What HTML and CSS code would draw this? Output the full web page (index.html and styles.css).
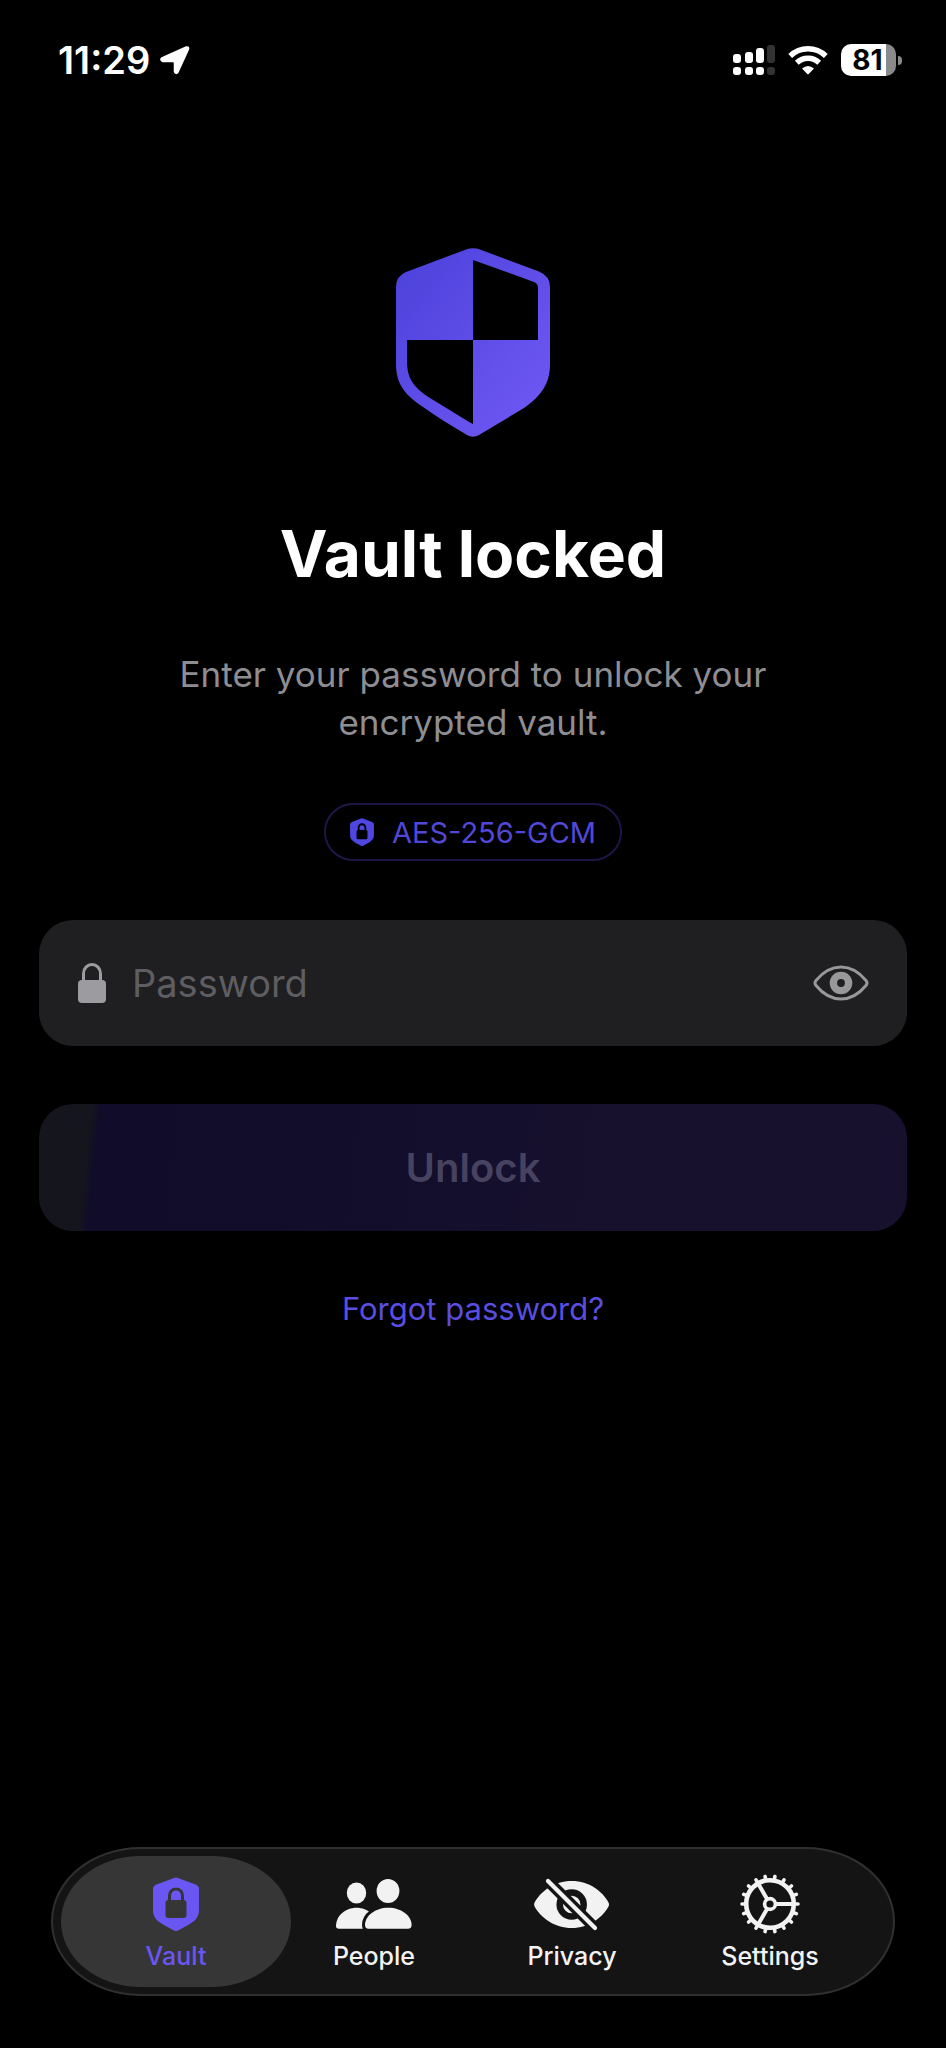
FILE: index.html
```html
<!DOCTYPE html>
<html lang="en">
<head>
    <meta charset="UTF-8">
    <meta name="viewport" content="width=device-width, initial-scale=1.0">
    <title>Vault locked</title>
    <link rel="stylesheet" href="styles.css">
</head>
<body>
    <header class="status-bar">
        <div class="status-left">
            <span class="time">11:29</span>
            <svg width="30" height="30" viewBox="0 0 30 30" aria-hidden="true">
                <path d="M2 13.500L26.500 2.500Q28.500 2 28 4L17.500 27Q16 29 15 26.500V18Q15 16 13 16H3Q0.500 15 2 13.500Z" fill="#fff" stroke="#fff" stroke-width="2.500" stroke-linejoin="round"/>
            </svg>
        </div>
        <div class="status-right">
            <svg width="42" height="31" viewBox="0 0 42 31" aria-hidden="true">
                <g fill="#fff">
                    <rect x="0" y="9" width="8" height="9" rx="3"/>
                    <rect x="12" y="7" width="8" height="11" rx="3"/>
                    <rect x="23" y="3" width="8" height="15" rx="3"/>
                    <rect x="0" y="22" width="8" height="8" rx="3"/>
                    <rect x="12" y="22" width="8" height="8" rx="3"/>
                    <rect x="23" y="22" width="8" height="8" rx="3"/>
                </g>
                <g fill="#333">
                    <rect x="34" y="0" width="8" height="18" rx="3"/>
                    <rect x="34" y="22" width="8" height="8" rx="3"/>
                </g>
            </svg>
            <svg width="40" height="30" viewBox="0 0 40 30" aria-hidden="true">
                <g fill="none" stroke="#fff" stroke-width="5.400">
                    <path d="M2.200 11A25.500 25.500 0 0 1 37.800 11"/>
                    <path d="M8.800 17.800A16 16 0 0 1 31.200 17.800"/>
                </g>
                <path d="M14 23.500Q20 18.500 26 23.500L20.700 29Q20 29.600 19.300 29Z" fill="#fff"/>
            </svg>
            <div class="battery">
                <span class="battery-level">81</span>
                <span class="battery-tip"></span>
            </div>
        </div>
    </header>

    <main class="unlock-screen">
        <svg class="logo" width="154" height="190" viewBox="0 0 154 190" aria-hidden="true">
            <defs>
                <linearGradient id="shield-fill" x1="0" y1="0" x2="1" y2="1">
                    <stop offset="0" stop-color="#4b41da"/>
                    <stop offset="1" stop-color="#7259f6"/>
                </linearGradient>
            </defs>
            <path fill="url(#shield-fill)" fill-rule="evenodd" d="M70 1.500Q77-1 84 1.500L143 23.500Q154 28 154 39V116C154 136 145 148 128 160L83 187Q77 190.500 71 187C55 177.500 41 169 27 159C9 147 0 136 0 116V39Q0 28 10 24ZM77 12V92H142V40Q142 35.500 138 34ZM11 92H77V176L74 174.500C60 166 47 158 34 150C17 139 11 130 11 113Z"/>
        </svg>

        <h1>Vault locked</h1>
        <p class="hint">Enter your password to unlock your encrypted vault.</p>

        <div class="badge">
            <svg width="24" height="28" viewBox="0 0 46 54" aria-hidden="true">
                <path fill="#4f46e0" d="M21 1Q23 0 25 1L42.500 7.500Q46 9 46 12V33C46 41 41 44.500 36 47.500L25 53.500Q23 54.500 21 53.500L10 47.500C5 44.500 0 41 0 33V12Q0 9 3.500 7.500Z"/>
                <rect x="12.500" y="23" width="21" height="18" rx="3" fill="#000"/>
                <path d="M16.500 24V18.500a6.500 6.500 0 0 1 13 0V24" fill="none" stroke="#000" stroke-width="3.500"/>
            </svg>
            <span>AES-256-GCM</span>
        </div>

        <form class="unlock-form">
            <div class="field">
                <svg width="28" height="40" viewBox="0 0 28 40" aria-hidden="true">
                    <rect x="0" y="17" width="28" height="23" rx="4" fill="#9c9ba0"/>
                    <path d="M5.500 18V10.500a8.500 9 0 0 1 17 0V18" fill="none" stroke="#9c9ba0" stroke-width="3"/>
                </svg>
                <input type="password" id="password" placeholder="Password" aria-label="Password">
                <button type="button" class="reveal" aria-label="Show password">
                    <svg width="56" height="36" viewBox="0 0 56 36" aria-hidden="true">
                        <path d="M3 20.500Q1 18 3 15.500C10 7 18 2 28 2S46 7 53 15.500Q55 18 53 20.500C46 29 38 34 28 34S10 29 3 20.500Z" fill="none" stroke="#98989a" stroke-width="3"/>
                        <circle cx="28" cy="18" r="7.600" fill="none" stroke="#98989a" stroke-width="7.400"/>
                    </svg>
                </button>
            </div>
            <button type="submit" class="unlock-btn" disabled>Unlock</button>
        </form>

        <a class="forgot" href="#">Forgot password?</a>
    </main>

    <nav class="tab-bar">
        <a class="tab active" href="#">
            <svg width="60" height="60" viewBox="-7 -3 60 60" aria-hidden="true">
                <path fill="#6a57f3" d="M21 1Q23 0 25 1L42.500 7.500Q46 9 46 12V33C46 41 41 44.500 36 47.500L25 53.500Q23 54.500 21 53.500L10 47.500C5 44.500 0 41 0 33V12Q0 9 3.500 7.500Z"/>
                <rect x="12.500" y="23" width="21" height="18" rx="3" fill="#363636"/>
                <path d="M16.500 24V18.500a6.500 6.500 0 0 1 13 0V24" fill="none" stroke="#363636" stroke-width="3"/>
            </svg>
            <span>Vault</span>
        </a>
        <a class="tab" href="#">
            <svg width="76" height="60" viewBox="0 -5 76 60" aria-hidden="true">
                <g fill="#f2f2f2">
                    <ellipse cx="20.500" cy="14" rx="9.700" ry="10.600"/>
                    <path d="M0 47C0 37 9 28.700 20.500 28.700S41 37 41 47Q41 49.700 38 49.700H3Q0 49.700 0 47Z"/>
                    <ellipse cx="52" cy="12" rx="11.400" ry="12"/>
                    <path d="M29 46C29 37 39 28.700 52.300 28.700S75.600 37 75.600 46Q75.600 49.700 72 49.700H32.600Q29 49.700 29 46Z" stroke="#141414" stroke-width="6" paint-order="stroke"/>
                </g>
            </svg>
            <span>People</span>
        </a>
        <a class="tab" href="#">
            <svg width="76" height="60" viewBox="0 -5 76 60" aria-hidden="true">
                <path d="M.6 27.500Q-.4 25.500 .6 23.500C7 12 20 2 37.700 2S68 12 74.500 23.500Q75.500 25.500 74.500 27.500C68 39 55 49 37.700 49S7 39 .6 27.500Z" fill="#f2f2f2"/>
                <circle cx="37.700" cy="25.500" r="12" fill="#f2f2f2" stroke="#141414" stroke-width="6.500"/>
                <path d="M11-1L64 52" stroke="#141414" stroke-width="11"/>
                <path d="M14 2L61 49" stroke="#f2f2f2" stroke-width="4.200" stroke-linecap="round"/>
            </svg>
            <span>Privacy</span>
        </a>
        <a class="tab" href="#">
            <svg width="60" height="60" viewBox="0 0 60 60" aria-hidden="true">
                <g fill="none" stroke="#f2f2f2" stroke-width="3.600" stroke-linecap="round">
                    <circle cx="30" cy="30" r="23.800" stroke-width="4.600"/>
                    <circle cx="30" cy="30" r="5.400"/>
                    <path d="M37 30H52M26.500 36L19 49M26.500 24L19 11" stroke-width="4"/>
                    <path d="M58 30H54M56.300 39.600L52.600 38.200M51.400 48L48.400 45.400M44 54.200L42 50.800M34.900 57.600L34.200 53.600M25.100 57.600L25.800 53.600M16 54.200L18 50.800M8.600 48L11.600 45.400M3.700 39.600L7.400 38.200M2 30H6M3.700 20.400L7.400 21.800M8.600 12L11.600 14.600M16 5.800L18 9.200M25.100 2.400L25.800 6.400M34.900 2.400L34.200 6.400M44 5.800L42 9.200M51.400 12L48.400 14.600M56.300 20.400L52.600 21.800"/>
                </g>
            </svg>
            <span>Settings</span>
        </a>
    </nav>
</body>
</html>
```

FILE: styles.css
```css
* {
    padding: 0;
    margin: 0;
    box-sizing: border-box;
    font-family: "Inter", sans-serif;
}
body {
    background: #000;
    color: #fff;
    min-height: 100vh;
    display: flex;
    flex-direction: column;
}
svg {
    display: block;
    flex-shrink: 0;
}
.status-bar {
    display: flex;
    justify-content: space-between;
    align-items: center;
    height: 120px;
    padding: 0 44px 0 58px;
}
.status-left {
    display: flex;
    align-items: center;
    gap: 10px;
}
.time {
    font-size: 38px;
    font-weight: 600;
}
.status-right {
    display: flex;
    align-items: center;
    gap: 13px;
}
.battery {
    display: flex;
    align-items: center;
    gap: 2px;
}
.battery-level {
    width: 55px;
    height: 32px;
    line-height: 32px;
    padding-right: 2px;
    border-radius: 10px;
    background: linear-gradient(90deg, #fff 81%, #8a8a8c 81%);
    color: #000;
    font-size: 28px;
    font-weight: 700;
    text-align: center;
}
.battery-tip {
    width: 4px;
    height: 9px;
    border-radius: 0 4px 4px 0;
    background: #8a8a8c;
}
.unlock-screen {
    display: flex;
    flex-direction: column;
    align-items: center;
    padding: 128px 39px 0;
}
h1 {
    margin-top: 76px;
    font-size: 64px;
    font-weight: 700;
    line-height: 80px;
}
.hint {
    max-width: 640px;
    margin-top: 56px;
    color: #8e8e92;
    font-size: 35px;
    line-height: 48px;
    text-align: center;
}
.badge {
    display: flex;
    align-items: center;
    gap: 18px;
    height: 58px;
    margin-top: 57px;
    padding: 0 24px;
    border: 2px solid #1d1746;
    border-radius: 29px;
    color: #5248d8;
    font-size: 29px;
}
.unlock-form {
    width: 100%;
    display: flex;
    flex-direction: column;
    gap: 58px;
    margin-top: 59px;
}
.field {
    display: flex;
    align-items: center;
    gap: 26px;
    height: 126px;
    padding: 0 38px 0 39px;
    border-radius: 34px;
    background: #1f1f21;
}
.field input {
    flex: 1;
    min-width: 0;
    border: none;
    outline: none;
    background: none;
    color: #fff;
    font-size: 38px;
}
.field input::placeholder {
    color: #5e5e62;
}
.reveal {
    border: none;
    background: none;
    cursor: pointer;
}
.unlock-btn {
    height: 127px;
    border: none;
    border-radius: 34px;
    background: linear-gradient(96deg, #15151d 6%, #100c29 7%, #110d2a 35%, #140f2c 50%, #17112e 65%);
    color: #464260;
    font-size: 40px;
    font-weight: 600;
}
.forgot {
    margin-top: 58px;
    color: #5a4ee0;
    font-size: 31px;
    line-height: 40px;
    text-decoration: none;
}
.tab-bar {
    display: flex;
    align-items: center;
    height: 149px;
    margin: auto 51px 52px;
    padding: 0 24px;
    border: 2px solid #303030;
    border-radius: 90px / 75px;
    background: #141414;
}
.tab {
    flex: 1;
    display: flex;
    flex-direction: column;
    align-items: center;
    justify-content: center;
    gap: 6px;
    height: 131px;
    padding-top: 2px;
    color: #f2f2f2;
    font-size: 25px;
    font-weight: 500;
    line-height: 32px;
    text-decoration: none;
}
.tab.active {
    margin: 0 -16px;
    padding: 2px 16px 0;
    border-radius: 80px / 66px;
    background: #363636;
    color: #6a57f3;
}
```
